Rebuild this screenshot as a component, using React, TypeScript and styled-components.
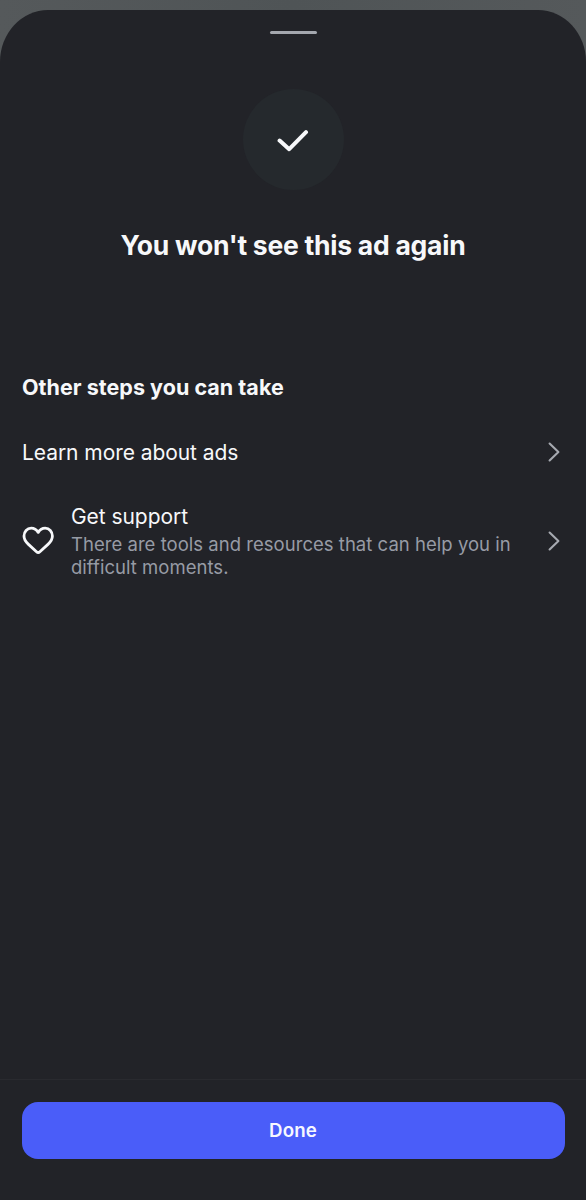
import React from 'react';
import styled, { createGlobalStyle } from 'styled-components';

const GlobalStyle = createGlobalStyle`
  *, *::before, *::after { box-sizing: border-box; }
  html, body { margin: 0; padding: 0; background: #505557; }
  body { font-family: Inter, 'Liberation Sans', sans-serif; color: #f7f8fa; -webkit-font-smoothing: antialiased; }
`;

const Screen = styled.div`
  display: flex;
  flex-direction: column;
  height: 1200px;
  padding-top: 10px;
  background: linear-gradient(90deg, #55595b, #4f5456 50%, #55595b);
`;

const Sheet = styled.main`
  flex: 1;
  display: flex;
  flex-direction: column;
  background: #222328;
  border-radius: 48px 48px 0 0 / 52px 52px 0 0;
`;

const Handle = styled.div`
  align-self: center;
  width: 47px;
  height: 3px;
  margin-top: 20.5px;
  border-radius: 1.5px;
  background: #a4a7ae;
`;

const Hero = styled.section`
  display: flex;
  flex-direction: column;
  align-items: center;
  padding-top: 55.5px;
`;

const Badge = styled.div`
  display: grid;
  place-items: center;
  width: 101px;
  height: 101px;
  border-radius: 50%;
  background: #25292d;
`;

const Title = styled.h1`
  margin: 38px 0 0;
  font-size: 26.5px;
  line-height: 34px;
  font-weight: 650;
  letter-spacing: -0.25px;
  white-space: nowrap;
`;

const Steps = styled.section`
  display: flex;
  flex-direction: column;
  padding: 0 26px 0 22px;
  margin-top: 111px;
`;

const SectionTitle = styled.h2`
  margin: 0;
  font-size: 21.5px;
  line-height: 28px;
  font-weight: 650;
  letter-spacing: 0.03px;
  white-space: nowrap;
`;

const Row = styled.div<{ $top: number }>`
  display: flex;
  align-items: center;
  margin-top: ${(p) => p.$top}px;
`;

const RowText = styled.div<{ $indent?: boolean }>`
  flex: 1;
  padding-left: ${(p) => (p.$indent ? 17 : 0)}px;
`;

const RowLabel = styled.div`
  height: 28px;
  font-size: 21px;
  line-height: 30px;
  letter-spacing: -0.06px;
  white-space: nowrap;
`;

const RowDescription = styled.div`
  padding: 3px 0 1px;
  color: #979ba5;
  font-size: 18.5px;
  line-height: 23px;
  letter-spacing: 0.03px;
  white-space: nowrap;
`;

const Icon = styled.svg`
  flex: none;
  display: block;
  fill: none;
  stroke: currentColor;
  stroke-linecap: round;
  stroke-linejoin: round;
`;

const ChevronIcon = styled(Icon)`
  color: #a6a9b0;
`;

const Footer = styled.footer`
  height: 121px;
  margin-top: auto;
  padding: 22px 21.5px 0;
  border-top: 1px solid #292a2f;
`;

const DoneButton = styled.button`
  display: block;
  width: 100%;
  height: 57px;
  padding: 0;
  border: 0;
  border-radius: 16px;
  background: #4a5df9;
  color: #f7f8ff;
  font-family: inherit;
  font-size: 18.7px;
  line-height: 57px;
  font-weight: 600;
  letter-spacing: 0.1px;
`;

const Chevron = () => (
  <ChevronIcon width="12" height="20" viewBox="0 0 12 20" strokeWidth="2.1">
    <path d="M1.6 1.5 10.4 10 1.6 18.5" />
  </ChevronIcon>
);

const Check = () => (
  <Icon width="32" height="24" viewBox="0 0 32 24" strokeWidth="4">
    <path d="M2.6 12.600 12.200 21.200 29 4.200" />
  </Icon>
);

const Heart = () => (
  <Icon width="32" height="30" viewBox="0 0 32 30" strokeWidth="2.8">
    <path d="M16.200 6.400C14.500 3.600 12 2.200 9.200 2.200 5.100 2.200 2 5.600 2 10.100c0 3.400 1.600 5.700 4.200 8l8.300 7.700c1.200 1.100 2.200 1.100 3.400 0l8.300-7.700c2.600-2.300 4.200-4.600 4.200-8C30.400 5.600 27.300 2.200 23.200 2.200c-2.800 0-5.300 1.400-7 4.200Z" />
  </Icon>
);

export default function App() {
  return (
    <>
      <GlobalStyle />
      <Screen>
        <Sheet>
          <Handle />
          <Hero>
            <Badge>
              <Check />
            </Badge>
            <Title>You won't see this ad again</Title>
          </Hero>
          <Steps>
            <SectionTitle>Other steps you can take</SectionTitle>
            <Row $top={37}>
              <RowText>
                <RowLabel>Learn more about ads</RowLabel>
              </RowText>
              <Chevron />
            </Row>
            <Row $top={36}>
              <Heart />
              <RowText $indent>
                <RowLabel>Get support</RowLabel>
                <RowDescription>
                  There are tools and resources that can help you in
                  <br />
                  difficult moments.
                </RowDescription>
              </RowText>
              <Chevron />
            </Row>
          </Steps>
          <Footer>
            <DoneButton type="button">Done</DoneButton>
          </Footer>
        </Sheet>
      </Screen>
    </>
  );
}
